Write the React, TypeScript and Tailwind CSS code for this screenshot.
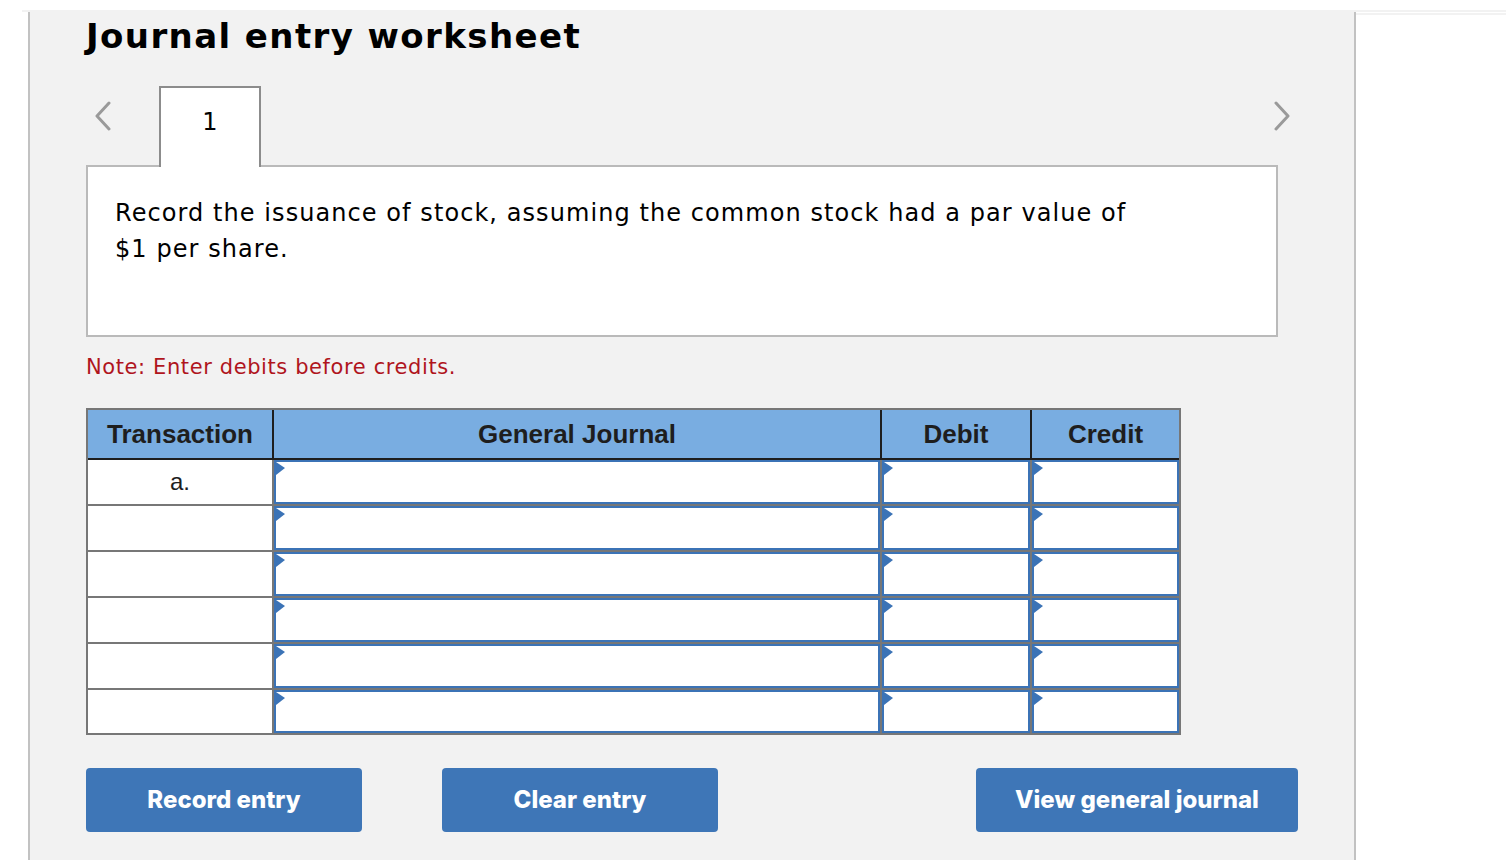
import React from 'react';

const verdana = { fontFamily: '"DejaVu Sans", Verdana, sans-serif' };

function Chevron({ dir }: { dir: 'left' | 'right' }) {
  return (
    <svg width="20" height="30" viewBox="0 0 20 30" fill="none">
      <path
        d={dir === 'left' ? 'M16 2 L4 15 L16 28' : 'M4 2 L16 15 L4 28'}
        stroke="#9a9a9a"
        strokeWidth="3"
        strokeLinecap="round"
        strokeLinejoin="round"
      />
    </svg>
  );
}

function InputCell({ width }: { width: string }) {
  return (
    <div className={`${width} h-full border-r-2 border-[#777777] last:border-r-0`}>
      <div className="relative h-full border-2 border-[#3b73b6] bg-white">
        <svg className="absolute left-0 top-0" width="9" height="14" viewBox="0 0 9 14">
          <path d="M0 0 L9 6 L0 13 Z" fill="#3b73b6" />
        </svg>
      </div>
    </div>
  );
}

function ActionButton({ children, className = '' }: { children: React.ReactNode; className?: string }) {
  return (
    <button
      type="button"
      className={`h-[64px] rounded-[4px] bg-[#3e76b7] text-[24px] font-extrabold text-white ${className}`}
      style={{ fontFamily: 'Inter, "Liberation Sans", sans-serif' }}
    >
      {children}
    </button>
  );
}

export default function App() {
  const rows = ['a.', '', '', '', '', ''];
  return (
    <div className="min-h-[860px] bg-white pt-[10px]">
      <div className="ml-[22px] h-[2px] bg-[#f2f2f2]" />
      <div className="ml-[6px] flex">
        <div className="ml-[22px] w-[1328px] min-h-[848px] border-x-2 border-[#c2c2c2] bg-[#f2f2f2] pl-[56px] pb-10">
          <h1 className="pt-[4px] text-[34px] font-bold leading-[40px] tracking-[1.4px] text-black" style={verdana}>
            Journal entry worksheet
          </h1>

          <div className="mt-[29px] flex w-[1206px] items-end">
            <div className="flex h-[80px] w-[73px] items-center pl-[7px] pb-[18px]">
              <Chevron dir="left" />
            </div>
            <div
              className="relative z-10 -mb-[2px] flex h-[81px] w-[102px] items-start justify-center border-2 border-b-0 border-[#8c8c8c] bg-white pt-[16px] text-[24px] text-black"
              style={verdana}
            >
              1
            </div>
            <div className="flex h-[80px] flex-1 items-center justify-end pb-[18px]">
              <Chevron dir="right" />
            </div>
          </div>

          <div className="h-[172px] w-[1192px] border-2 border-[#bababa] bg-white px-[27px] pt-[28px]">
            <p className="text-[24px] leading-[36px] tracking-[1.07px] text-black" style={verdana}>
              Record the issuance of stock, assuming the common stock had a par value of
              <br />
              $1 per share.
            </p>
          </div>

          <p className="mt-[15px] text-[21px] leading-[30px] tracking-[0.6px] text-[#b0151d]" style={verdana}>
            Note: Enter debits before credits.
          </p>

          <div className="mt-[26px] w-[1095px] border-2 border-[#777777]" style={{ fontFamily: '"Liberation Sans", Arial, sans-serif' }}>
            <div className="flex h-[50px] border-b-2 border-[#1e1e1e] bg-[#79ade1] text-[26px] font-bold text-[#1e1e1e]">
              <div className="flex w-[186px] items-center justify-center border-r-2 border-[#1e1e1e]">Transaction</div>
              <div className="flex w-[608px] items-center justify-center border-r-2 border-[#1e1e1e]">General Journal</div>
              <div className="flex w-[150px] items-center justify-center border-r-2 border-[#1e1e1e]">Debit</div>
              <div className="flex flex-1 items-center justify-center">Credit</div>
            </div>
            {rows.map((r, i) => (
              <div key={i} className="flex h-[46px] border-b-2 border-[#777777] bg-white last:h-[43px] last:border-b-0">
                <div className="flex w-[186px] items-center justify-center border-r-2 border-[#777777] text-[24px] text-[#1e1e1e]">
                  {r}
                </div>
                <InputCell width="w-[608px]" />
                <InputCell width="w-[150px]" />
                <InputCell width="flex-1" />
              </div>
            ))}
          </div>

          <div className="mt-[33px] flex">
            <ActionButton className="w-[276px]">Record entry</ActionButton>
            <ActionButton className="ml-[80px] w-[276px]">Clear entry</ActionButton>
            <ActionButton className="ml-[258px] w-[322px]">View general journal</ActionButton>
          </div>
        </div>
        <div className="mt-px h-[2px] flex-1 bg-[#f2f2f2]" />
      </div>
    </div>
  );
}
